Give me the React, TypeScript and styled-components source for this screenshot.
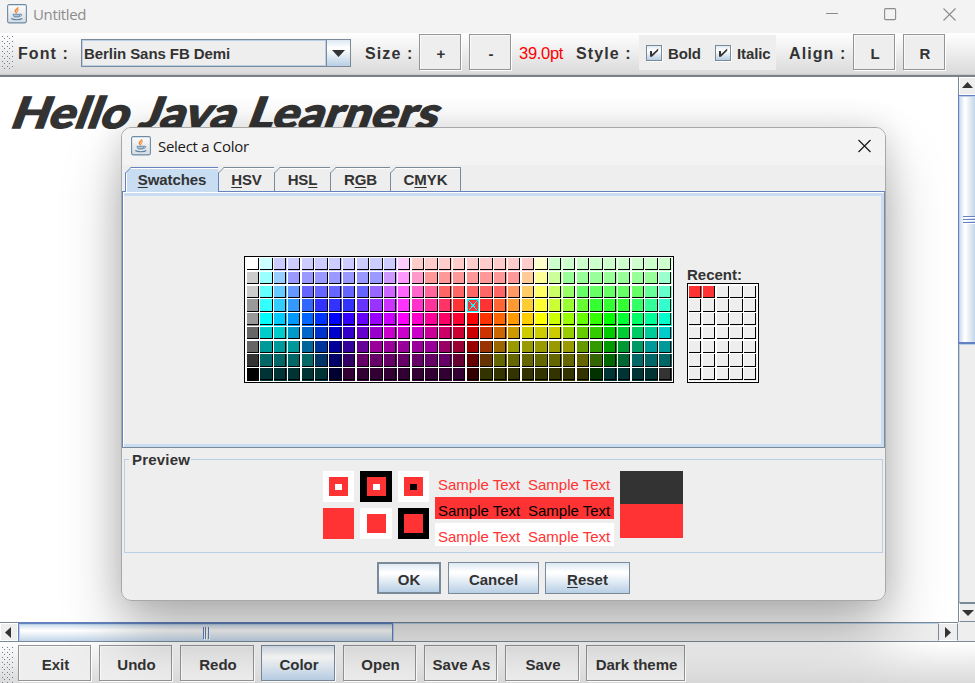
import React from "react";
import styled, { createGlobalStyle, css } from "styled-components";

const GlobalStyle = createGlobalStyle`
  *, *::before, *::after { box-sizing: border-box; }
  html, body { margin: 0; padding: 0; overflow: hidden; }
  body { font-family: "Liberation Sans", Arial, sans-serif; font-size: 15px; font-weight: 700; color: #333; }
`;

const metalFace = "linear-gradient(180deg, #dde8f3 0%, #ffffff 30%, #ffffff 34%, #b8cfe5 100%)";

const Frame = styled.div`
  position: relative;
  width: 975px;
  height: 683px;
  overflow: hidden;
  display: flex;
  flex-direction: column;
  background: #eee;
  white-space: nowrap;
`;

/* ---------- window title bars ---------- */

const TitleBar = styled.header<{ $h: number; $pad: string }>`
  display: flex;
  align-items: flex-start;
  flex: none;
  height: ${(p) => p.$h}px;
  padding: ${(p) => p.$pad};
  background: #f3f3f3;
`;

const TitleText = styled.span<{ $color: string; $gap: number; $track: number }>`
  flex: 1;
  margin-left: ${(p) => p.$gap}px;
  font: 400 15px/20px "Open Sans", "Noto Sans", sans-serif;
  letter-spacing: ${(p) => p.$track}px;
  color: ${(p) => p.$color};
`;

const WindowControls = styled.div`
  display: flex;
  gap: 46px;
  padding-top: 3px;
  svg { display: block; }
`;

const IconSvg = styled.svg`
  flex: none;
`;

const JavaIcon = () => (
  <IconSvg width="20" height="20" viewBox="0 0 20 20">
    <defs>
      <linearGradient id="javaTile" x1="0" y1="0" x2="0" y2="1">
        <stop offset="0" stopColor="#fdfdfd" />
        <stop offset="1" stopColor="#d5dbe1" />
      </linearGradient>
    </defs>
    <rect x="0.6" y="0.6" width="18.8" height="18.3" rx="1.6" fill="url(#javaTile)" stroke="#6d8ba5" strokeWidth="1.1" />
    <path d="M10.6 3.2c1.2 1.6-3.6 2.8-2 4.6.5.6.9 1 1 1.5" fill="none" stroke="#f08a30" strokeWidth="1.6" />
    <path d="M12 5.6c-1.8.8-2.2 1.6-1.4 2.5" fill="none" stroke="#f2a15c" strokeWidth="1.1" />
    <path d="M5.6 9.8h7.8c0 2-.8 3.4-1.8 3.8H7.5c-1.2-.5-1.9-1.8-1.9-3.8z" fill="#7b9cb8" />
    <path d="M13.2 10.2c2.2-.5 2.1 1.9-.8 2.2" fill="none" stroke="#5c82a3" strokeWidth="1" />
    <path d="M7 11.5h5" stroke="#c6d4e0" strokeWidth="0.7" />
    <path d="M4.3 14.6c2 1.5 9 1.5 11 0" fill="none" stroke="#5c82a3" strokeWidth="1.2" />
  </IconSvg>
);

/* ---------- tool bars ---------- */

const ToolBar = styled.div<{ $h: number; $top: number }>`
  display: flex;
  align-items: flex-start;
  flex: none;
  height: ${(p) => p.$h}px;
  padding-top: ${(p) => p.$top}px;
  background: linear-gradient(180deg, #ffffff, #dadada);
`;

const TopToolBar = styled(ToolBar)`
  border-bottom: 1px solid #c9c9c9;
`;

const Grip = styled.div<{ $h: number; $mr: number }>`
  flex: none;
  width: 13px;
  height: ${(p) => p.$h}px;
  margin-right: ${(p) => p.$mr}px;
  background-image:
    radial-gradient(circle at 0.5px 0.5px, #6f8092 0.7px, transparent 0.8px),
    radial-gradient(circle at 0.5px 0.5px, #6f8092 0.7px, transparent 0.8px);
  background-size: 5px 5px;
  background-position: 2px 2px, 4px 4px;
`;

const BarLabel = styled.span<{ $w: number; $track?: number }>`
  flex: none;
  width: ${(p) => p.$w}px;
  font-size: 16px;
  line-height: 39px;
  letter-spacing: ${(p) => p.$track ?? 1.1}px;
`;

const SizeReadout = styled.span`
  flex: none;
  width: 57px;
  font-size: 16.5px;
  font-weight: 400;
  line-height: 38px;
  letter-spacing: -0.3px;
  color: #f00;
`;

const Combo = styled.div`
  display: flex;
  flex: none;
  width: 270px;
  height: 28px;
  margin: 5px 14px 0 0;
  border: 1px solid #7a8a99;
`;

const ComboValue = styled.span`
  flex: 1;
  border: 1px solid #b8cfe5;
  padding-left: 1px;
  line-height: 26px;
  letter-spacing: -0.07px;
  background: #eee;
`;

const ComboArrow = styled.span`
  display: grid;
  place-items: center;
  width: 24px;
  border-left: 1px solid #7a8a99;
  background: ${metalFace};
`;

const MetalButton = styled.button<{ $w: number; $mr?: number; $on?: boolean }>`
  flex: none;
  width: ${(p) => p.$w}px;
  height: 36px;
  margin: 0 ${(p) => p.$mr ?? 0}px 0 0;
  padding: 2px 0 0 2px;
  font: inherit;
  color: #333;
  border: 1px solid ${(p) => (p.$on ? "#7a8a99" : "#949494")};
  border-radius: 0;
  background: ${(p) => (p.$on ? metalFace : "#eee")};
  box-shadow: 1px 1px 0 #fff${(p) => (p.$on ? "" : ", inset 1px 1px 0 #fafafa")};
`;

const CheckPanel = styled.div`
  display: flex;
  align-items: center;
  flex: none;
  width: 137px;
  height: 35px;
  margin: 1px 13px 0 0;
  padding: 0 0 0 7px;
  background: #eee;
`;

const CheckLabel = styled.label<{ $w: number }>`
  display: flex;
  align-items: center;
  width: ${(p) => p.$w}px;
  gap: 6px;
  padding-top: 2px;
  letter-spacing: -0.1px;
`;

const CheckBox = styled.span`
  display: block;
  width: 16px;
  height: 16px;
  margin-top: -1px;
  border: 1px solid #7a8a99;
  background: ${metalFace};
  box-shadow: 1px 1px 0 #fff;
  svg { display: block; }
`;

const Tick = () => (
  <svg width="14" height="14" viewBox="0 0 14 14">
    <path d="M3 5h2v3.2L11.2 2.6v2.2L5 10.8H3z" fill="#333" />
  </svg>
);

/* ---------- editor and scroll bars ---------- */

const EditorRow = styled.div`
  display: flex;
  flex: none;
  height: 547px;
  border-top: 2px solid #7a8389;
`;

const TextPane = styled.div`
  width: 958px;
  padding: 9px 0 0 9px;
  background: #fff;
`;

const DocumentText = styled.div`
  width: max-content;
  font: 900 43px/52px Lato, sans-serif;
  letter-spacing: 0.2px;
  -webkit-text-stroke: 1.3px #333;
  transform: scaleX(1.14) skewX(-18deg);
  transform-origin: 0 80%;
`;

const VerticalBar = styled.div`
  display: flex;
  flex-direction: column;
  width: 17px;
  border-left: 1px solid #7a8a99;
`;

const ArrowCell = styled.div<{ $w: number; $h: number; $side: "top" | "bottom" | "left" | "right" }>`
  display: grid;
  place-items: center;
  flex: none;
  width: ${(p) => p.$w}px;
  height: ${(p) => p.$h}px;
  background: #eee;
  border: 1px solid #fff;
  ${(p) => p.$side === "top" && css`padding-bottom: 2px;`}
  ${(p) => p.$side === "left" && css`padding-right: 3px;`}
  ${(p) => p.$side === "bottom" && css`border-top: 2px solid #7a8a99; border-bottom: 1px solid #7a8a99;`}
  ${(p) => p.$side === "right" && css`border-left: 1px solid #7a8a99; border-right: 1px solid #7a8a99;`}
  svg { display: block; }
`;

const VerticalThumb = styled.div`
  display: grid;
  align-content: center;
  justify-content: end;
  flex: none;
  height: 249px;
  border: solid #6382bf;
  border-width: 1px 0 2px 0;
  box-shadow: inset 1px 1px 0 #b8cfe5, -1px 0 0 #6382bf;
  background: linear-gradient(90deg, #c8d9eb, #ffffff 35%, #ffffff 40%, #b8cfe5 110%);
`;

const Ridges = styled.span<{ $vertical?: boolean }>`
  display: flex;
  flex-direction: ${(p) => (p.$vertical ? "column" : "row")};
  gap: ${(p) => (p.$vertical ? "2px" : "1.5px")};
  i {
    display: block;
    width: ${(p) => (p.$vertical ? 12 : 1)}px;
    height: ${(p) => (p.$vertical ? 1 : 12)}px;
    background: #6382bf;
    box-shadow: 1px 1px 0 #fff;
  }
`;

const Track = styled.div`
  flex: 1;
  background: #eee;
  box-shadow: inset 1px 1px 0 #b8cfe5;
`;

const HorizontalBar = styled.div`
  display: flex;
  flex: none;
  height: 20px;
  width: 958px;
  border-top: 1px solid #7a8a99;
  border-bottom: 1px solid #7a8a99;
`;

const BarRow = styled.div`
  display: flex;
  flex: none;
  background: #eee;
  &::after { content: ""; flex: 1; border-bottom: 1px solid #7a8a99; }
`;

const HorizontalThumb = styled.div`
  display: grid;
  place-items: center;
  width: 375px;
  border: solid #6382bf;
  border-width: 1px 1px 0;
  box-shadow: inset 1px 1px 0 #b8cfe5, 0 -1px 0 #6382bf;
  background: linear-gradient(180deg, #c8d9eb, #ffffff 35%, #ffffff 40%, #b8cfe5 110%);
`;

/* ---------- colour dialog ---------- */

const Dialog = styled.section`
  position: absolute;
  left: 121px;
  top: 127px;
  width: 765px;
  height: 474px;
  display: flex;
  flex-direction: column;
  overflow: hidden;
  border: 1px solid #a8a8a8;
  border-radius: 10px;
  background: #eee;
`;

const DialogShadow = styled.div`
  position: absolute;
  left: 121px;
  top: 127px;
  width: 765px;
  height: 474px;
  border-radius: 10px;
  box-shadow: 0 34px 60px rgba(0, 0, 0, 0.27), 0 0 32px rgba(0, 0, 0, 0.14);
`;

const TabRow = styled.div`
  display: flex;
  flex: none;
  height: 26px;
  padding: 2px 0 0 3px;
`;

const Tab = styled.div<{ $w: number; $on?: boolean }>`
  position: relative;
  width: ${(p) => p.$w}px;
  height: 24px;
  flex: none;
  line-height: 24px;
  text-align: center;
  letter-spacing: -0.1px;
  border-top: 1px solid ${(p) => (p.$on ? "#6382bf" : "#7a8a99")};
  border-right: 1px solid ${(p) => (p.$on ? "#6382bf" : "#7a8a99")};
  ${(p) => p.$on && css`border-left: 1px solid #6382bf; height: 25px;`}
  background: ${(p) => (p.$on ? "#c8ddf2" : "#eee")};
  box-shadow: inset 0 1px 0 #fff${(p) => (p.$on ? ", inset 1px 0 0 #fff" : "")};
  svg { position: absolute; left: -1px; top: -1px; }
`;

const TabCorner = ({ on }: { on?: boolean }) => (
  <svg width="7" height="7" viewBox="0 0 7 7">
    <path d="M0 0H6L0 6Z" fill="#eee" />
    <path d="M0.5 6L6 0.5" stroke={on ? "#6382bf" : "#7a8a99"} fill="none" />
  </svg>
);

const Key = styled.span`
  text-decoration: underline;
  text-decoration-thickness: 1px;
  text-underline-offset: 2px;
`;

const SwatchPanel = styled.div`
  display: flex;
  align-items: flex-start;
  flex: none;
  width: 763px;
  height: 257px;
  padding: 64px 0 0 121px;
  border: 1px solid #6382bf;
  border-right-color: #7a8a99;
  border-bottom-color: #7a8a99;
  box-shadow: inset 1px 1px 0 #fff, inset 0 4px 0 #c8ddf2, inset -3px 0 0 #c8ddf2, inset 0 -3px 0 #c8ddf2;
`;

const SwatchFrame = styled.div<{ $w: number; $h: number; $pad: string }>`
  width: ${(p) => p.$w}px;
  height: ${(p) => p.$h}px;
  padding: ${(p) => p.$pad};
  border: 1px solid #000;
  background: #fff;
`;

const SwatchLine = styled.div<{ $kind: number }>`
  display: flex;
  height: ${(p) => (p.$kind === 0 ? 13 : 14)}px;
`;

/* The 11px swatches are scaled by 1.25, so edges fall in a four-step cycle. */
const fillSize = [12, 13, 13, 12];
const edgeSize = [11, 12, 11, 11];

const Swatch = styled.div<{ $c: string; $x: number; $y: number }>`
  flex: none;
  width: ${(p) => fillSize[p.$x]}px;
  height: ${(p) => fillSize[p.$y]}px;
  margin-right: ${(p) => (p.$x === 3 ? 2 : 1)}px;
  background:
    linear-gradient(#000, #000) ${(p) => edgeSize[p.$x]}px 0 / 1px ${(p) => edgeSize[p.$y] + 1}px no-repeat,
    linear-gradient(#000, #000) 0 ${(p) => edgeSize[p.$y]}px / ${(p) => edgeSize[p.$x] + 1}px 1px no-repeat,
    ${(p) => p.$c};
  svg { display: block; }
`;

const RecentColumn = styled.div`
  margin: 9px 0 0 13px;
`;

const RecentLabel = styled.div`
  height: 18px;
  line-height: 20px;
`;

const fill = (spec: string) =>
  spec.split(" ").flatMap((part) => {
    const [c, n] = part.split("*");
    return Array<string>(Number(n ?? 1)).fill("#" + c);
  });

const palette = [
  "fff cff ccf*9 fcf fcc*9 ffc cfc*9",
  "ccc 9ff 9cf 99f*7 c9f f9f f9c f99*7 fc9 ff9 cf9 9f9*7 9fc",
  "ccc 6ff 6cf 69f 66f*5 96f c6f f6f f6c f69 f66*5 f96 fc6 ff6 cf6 9f6 6f6*5 6f9 6fc",
  "999 3ff 3cf 39f 36f 33f*3 63f 93f c3f f3f f3c f39 f36 f33*3 f63 f93 fc3 ff3 cf3 9f3 6f3 3f3*3 3f6 3f9 3fc",
  "999 0ff 0cf 09f 06f 03f 00f 30f 60f 90f c0f f0f f0c f09 f06 f03 f00 f30 f60 f90 fc0 ff0 cf0 9f0 6f0 3f0 0f0 0f3 0f6 0f9 0fc",
  "666 0cc*2 09c 06c 03c 00c 30c 60c 90c c0c*3 c09 c06 c03 c00 c30 c60 c90 cc0*3 9c0 6c0 3c0 0c0 0c3 0c6 0c9 0cc",
  "666 099*3 069 039 009 309 609 909*5 906 903 900 930 960 990*5 690 390 090 093 096 099*2",
  "333 066*4 036 006 306 606*7 603 600 630 660*7 360 060 063 066*3",
  "000 033*5 003 303*9 300 330*8 030 033*4 333",
].map(fill);

const SelectedMark = () => (
  <svg width="12" height="13" viewBox="0 0 12 13" shapeRendering="crispEdges">
    <rect width="12" height="13" fill="#f33" />
    <rect x="0.5" y="0.5" width="11" height="12" fill="none" stroke="#0ff" />
    <path d="M1.5 1.5L10.5 11.5M10.5 1.5L1.5 11.5" stroke="#0ff" strokeWidth="1" />
  </svg>
);

const Preview = styled.fieldset`
  display: flex;
  align-items: flex-start;
  flex: none;
  width: 759px;
  height: 103px;
  margin: 2px 0 0 2px;
  padding: 3px 0 0 198px;
  border: 1px solid #b8cfe5;
  min-width: 0;
`;

const PreviewLegend = styled.legend`
  height: 18px;
  line-height: 19px;
  margin-left: -194px;
  padding: 0 1px 0 3px;
  letter-spacing: 0.2px;
`;

const PreviewSquares = styled.div`
  display: grid;
  grid-template-columns: 31px 32px 31px;
  grid-template-rows: 31px 31px;
  gap: 6px;
`;

const Square = styled.div<{ $bg: string; $core?: string }>`
  display: grid;
  place-items: center;
  background: ${(p) => p.$bg};
  &::before {
    content: "";
    width: 19px;
    height: 19px;
    background: #f33;
    grid-area: 1 / 1;
  }
  &::after {
    content: "";
    width: 7px;
    height: 6px;
    background: ${(p) => p.$core ?? "#f33"};
    grid-area: 1 / 1;
  }
`;

const SampleStack = styled.div`
  display: flex;
  flex-direction: column;
  width: 179px;
  margin: 0 6px;
  gap: 4px;
`;

const Sample = styled.div<{ $bg?: string; $c: string; $h: number }>`
  display: flex;
  gap: 8px;
  padding-left: 3px;
  height: ${(p) => p.$h}px;
  line-height: 27px;
  font-weight: 400;
  color: ${(p) => p.$c};
  background: ${(p) => p.$bg ?? "transparent"};
  span { width: 82px; }
`;

const BeforeAfter = styled.div`
  width: 63px;
  height: 67px;
  background: linear-gradient(180deg, #333 33px, #f33 33px);
`;

const DialogButtons = styled.div`
  display: flex;
  padding: 9px 0 0 255px;
`;

const DialogButton = styled.button<{ $w: number; $mr: number; $main?: boolean }>`
  width: ${(p) => p.$w}px;
  height: 32px;
  margin: 0 ${(p) => p.$mr}px 0 0;
  padding: 3px 0 0;
  font: inherit;
  color: #333;
  border: ${(p) => (p.$main ? 2 : 1)}px solid #7a8a99;
  border-radius: 0;
  background: ${metalFace};
`;

const bottomButtons: [string, number, number][] = [
  ["Exit", 73, 8],
  ["Undo", 73, 8],
  ["Redo", 74, 7],
  ["Color", 74, 8],
  ["Open", 73, 8],
  ["Save As", 73, 8],
  ["Save", 74, 7],
  ["Dark theme", 99, 0],
];

export default function App() {
  return (
    <>
      <GlobalStyle />
      <Frame>
        <TitleBar $h={33} $pad="4px 19px 0 7px">
          <JavaIcon />
          <TitleText $color="#8c8c8c" $gap={6} $track={-0.35}>Untitled</TitleText>
          <WindowControls>
            <svg width="12" height="14" viewBox="0 0 12 14"><path d="M0 6.5h12" stroke="#8c8c8c" /></svg>
            <svg width="13" height="14" viewBox="0 0 13 14"><rect x="0.6" y="1.6" width="11" height="11" rx="1" fill="none" stroke="#8c8c8c" strokeWidth="1.1" /></svg>
            <svg width="13" height="14" viewBox="0 0 13 14"><path d="M.5 1.5l12 12M12.5 1.5l-12 12" stroke="#8c8c8c" strokeWidth="1.1" /></svg>
          </WindowControls>
        </TitleBar>

        <TopToolBar $h={42} $top={1}>
          <Grip $h={37} $mr={5} />
          <BarLabel $w={63}>Font :</BarLabel>
          <Combo>
            <ComboValue>Berlin Sans FB Demi</ComboValue>
            <ComboArrow>
              <svg width="13" height="7" viewBox="0 0 13 7"><path d="M0 0h13L6.5 7z" fill="#333" /></svg>
            </ComboArrow>
          </Combo>
          <BarLabel $w={54}>Size :</BarLabel>
          <MetalButton $w={42} $mr={8}>+</MetalButton>
          <MetalButton $w={42} $mr={8}>-</MetalButton>
          <SizeReadout>39.0pt</SizeReadout>
          <BarLabel $w={63}>Style :</BarLabel>
          <CheckPanel>
            <CheckLabel $w={69}><CheckBox><Tick /></CheckBox>Bold</CheckLabel>
            <CheckLabel $w={60}><CheckBox><Tick /></CheckBox>Italic</CheckLabel>
          </CheckPanel>
          <BarLabel $w={64}>Align :</BarLabel>
          <MetalButton $w={42} $mr={8}>L</MetalButton>
          <MetalButton $w={42}>R</MetalButton>
        </TopToolBar>

        <EditorRow>
          <TextPane>
            <DocumentText>Hello Java Learners</DocumentText>
          </TextPane>
          <VerticalBar>
            <ArrowCell $w={17} $h={18} $side="top">
              <svg width="11" height="6" viewBox="0 0 11 6"><path d="M0 6h11L5.5 0z" fill="#333" /></svg>
            </ArrowCell>
            <VerticalThumb>
              <Ridges $vertical><i /><i /><i /></Ridges>
            </VerticalThumb>
            <Track />
            <ArrowCell $w={17} $h={20} $side="bottom">
              <svg width="12" height="6" viewBox="0 0 12 6"><path d="M0 0h12L6 6z" fill="#333" /></svg>
            </ArrowCell>
          </VerticalBar>
        </EditorRow>

        <BarRow>
          <HorizontalBar>
            <ArrowCell $w={18} $h={18} $side="left">
              <svg width="6" height="11" viewBox="0 0 6 11"><path d="M6 0v11L0 5.5z" fill="#333" /></svg>
            </ArrowCell>
            <HorizontalThumb>
              <Ridges><i /><i /><i /></Ridges>
            </HorizontalThumb>
            <Track />
            <ArrowCell $w={20} $h={18} $side="right">
              <svg width="6" height="11" viewBox="0 0 6 11"><path d="M0 0v11l6-5.5z" fill="#333" /></svg>
            </ArrowCell>
          </HorizontalBar>
        </BarRow>

        <ToolBar $h={41} $top={3}>
          <Grip $h={38} $mr={5} />
          {bottomButtons.map(([label, w, gap]) => (
            <MetalButton key={label} $w={w} $mr={gap} $on={label === "Color"}>{label}</MetalButton>
          ))}
        </ToolBar>

        <DialogShadow />
        <Dialog>
          <TitleBar $h={37} $pad="8px 14px 0 9px">
            <JavaIcon />
            <TitleText $color="#1a1a1a" $gap={7} $track={-0.3}>Select a Color</TitleText>
            <WindowControls>
              <svg width="13" height="14" viewBox="0 0 13 14"><path d="M.5 1l12 12M12.5 1l-12 12" stroke="#1a1a1a" strokeWidth="1.2" /></svg>
            </WindowControls>
          </TitleBar>
          <TabRow>
            <Tab $w={94} $on><TabCorner on /><Key>S</Key>watches</Tab>
            <Tab $w={56}><TabCorner /><Key>H</Key>SV</Tab>
            <Tab $w={56}><TabCorner />HS<Key>L</Key></Tab>
            <Tab $w={60}><TabCorner />R<Key>G</Key>B</Tab>
            <Tab $w={70}><TabCorner />C<Key>M</Key>YK</Tab>
          </TabRow>
          <SwatchPanel>
            <SwatchFrame $w={430} $h={127} $pad="1px 0 0 2px">
              {palette.map((row, r) => (
                <SwatchLine key={r} $kind={(r + 2) % 4}>
                  {row.map((c, i) => (
                    <Swatch key={i} $c={c} $x={i % 4} $y={(r + 2) % 4}>
                      {r === 3 && i === 16 && <SelectedMark />}
                    </Swatch>
                  ))}
                </SwatchLine>
              ))}
            </SwatchFrame>
            <RecentColumn>
              <RecentLabel>Recent:</RecentLabel>
              <SwatchFrame $w={72} $h={100} $pad="2px 0 0 1px">
                {Array.from({ length: 7 }, (_, r) => (
                  <SwatchLine key={r} $kind={r % 4}>
                    {Array.from({ length: 5 }, (_, i) => (
                      <Swatch key={i} $c={r === 0 && i < 2 ? "#f33" : "#eee"} $x={(i + 2) % 4} $y={r % 4} />
                    ))}
                  </SwatchLine>
                ))}
              </SwatchFrame>
            </RecentColumn>
          </SwatchPanel>
          <Preview>
            <PreviewLegend>Preview</PreviewLegend>
            <PreviewSquares>
              <Square $bg="#fff" $core="#fff" />
              <Square $bg="#000" $core="#fff" />
              <Square $bg="#fff" $core="#000" />
              <Square $bg="#f33" />
              <Square $bg="#fff" />
              <Square $bg="#000" />
            </PreviewSquares>
            <SampleStack>
              <Sample $c="#f33" $h={22}><span>Sample Text</span><span>Sample Text</span></Sample>
              <Sample $c="#000" $bg="#f33" $h={22}><span>Sample Text</span><span>Sample Text</span></Sample>
              <Sample $c="#f33" $bg="#fff" $h={23}><span>Sample Text</span><span>Sample Text</span></Sample>
            </SampleStack>
            <BeforeAfter />
          </Preview>
          <DialogButtons>
            <DialogButton $w={64} $mr={7} $main>OK</DialogButton>
            <DialogButton $w={91} $mr={6}>Cancel</DialogButton>
            <DialogButton $w={85} $mr={0}><Key>R</Key>eset</DialogButton>
          </DialogButtons>
        </Dialog>
      </Frame>
    </>
  );
}
